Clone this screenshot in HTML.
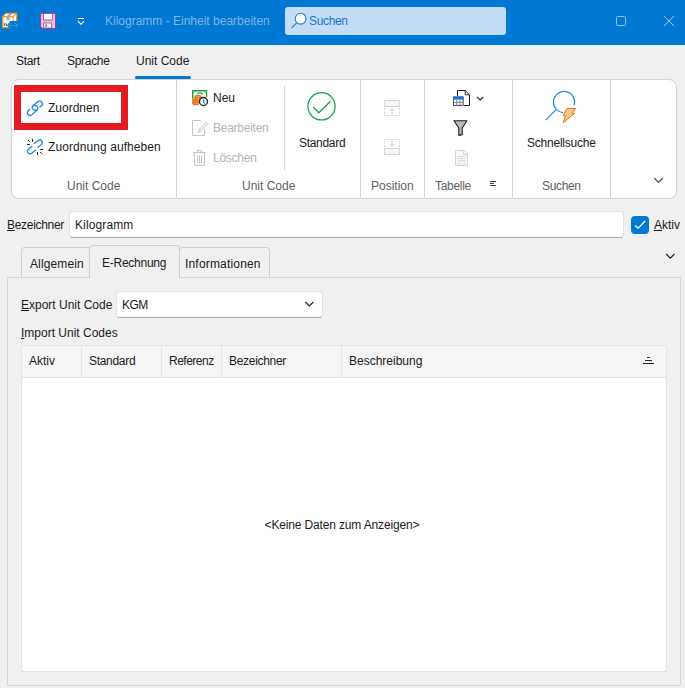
<!DOCTYPE html>
<html lang="de">
<head>
<meta charset="utf-8">
<title>Kilogramm - Einheit bearbeiten</title>
<style>
*{box-sizing:border-box;margin:0;padding:0}
html,body{width:685px;height:688px;overflow:hidden}
body{background:#f0f0f0;font-family:"Liberation Sans",sans-serif;font-size:12px;color:#1b1b1b;position:relative}
.t{position:absolute;white-space:nowrap;line-height:16px;height:16px}
.abs{position:absolute}
#titlebar{position:absolute;left:0;top:0;width:685px;height:45px;background:#0078d4}
#search{position:absolute;left:285px;top:7px;width:221px;height:28px;background:#c2ddf5;border-radius:3px}
#ribbon{position:absolute;left:11px;top:79px;width:666px;height:120px;background:#fff;border:1px solid #d3d3d3;border-radius:8px}
.vsep{position:absolute;width:1px;background:#d2d2d2}
.glabel{color:#616161}
.dis{color:#b4b4b4}
#inp{position:absolute;left:69px;top:211px;width:555px;height:27px;background:#fff;border:1px solid #e2e2e2;border-bottom-color:#a8a8a8;border-radius:4px}
#chk{position:absolute;left:631px;top:216px;width:18px;height:18px;background:#0078d4;border-radius:4px}
.tab{position:absolute;border:1px solid #d0d0d0;border-bottom:none;border-radius:4px 4px 0 0;background:#f0f0f0}
#panel{position:absolute;left:7px;top:277px;width:674px;height:409px;border:1px solid #d6d6d6;background:#f0f0f0}
#combo{position:absolute;left:116px;top:291px;width:207px;height:27px;background:#fff;border:1px solid #e2e2e2;border-bottom-color:#a8a8a8;border-radius:4px}
#grid{position:absolute;left:21px;top:345px;width:646px;height:327px;background:#fff;border:1px solid #e3e3e3}
#ghead{position:absolute;left:0;top:0;width:644px;height:32px;background:#f5f5f5;border-bottom:1px solid #e6e6e6}
.csep{position:absolute;top:0;width:1px;height:31px;background:#e4e4e4}
</style>
</head>
<body>
<!-- title bar -->
<div id="titlebar">
  <div class="t" style="left:105px;top:13px;color:#7fb6ea">Kilogramm - Einheit bearbeiten</div>
  <div id="search"></div>
  <div class="t" style="left:309px;top:13px;color:#1b74d2;letter-spacing:-0.35px">Suchen</div>
  <!-- app icon -->
  <svg class="abs" style="left:0px;top:8px" width="22" height="24" viewBox="0 8 22 24">
    <path d="M2.6 16.6 L5.8 13.4 H16.6 V24.4 L13.2 27.6 H2.6 Z" fill="#fff" stroke="#f7931e" stroke-width="1.3" stroke-linejoin="round"/>
    <path d="M2.6 16.6 H13.2 L16.6 13.4 M13.2 16.6 V27.6" fill="none" stroke="#f7931e" stroke-width="1.2"/>
    <path d="M6.6 16.4 Q7 14.6 10.6 13.6 L11.8 14.4 Q9.6 15.2 9.6 16.6 V20.4 H6.6 Z" fill="#a9a9a9"/>
    <path d="M4.3 23.2 V26 M5.9 23.2 L6.8 26" stroke="#333" stroke-width="0.9" fill="none"/>
    <path d="M6.8 25.5 L10.2 21 H17.6 L18.6 25.5 L14.6 29.4 H10.6 Z" fill="#0078d4"/>
    <path d="M8.2 25.5 H17.4 M10.4 23.1 L8 25.5 L10.4 27.9 M15.2 23.1 L17.6 25.5 L15.2 27.9" fill="none" stroke="#3596e0" stroke-width="1"/>
  </svg>
  <!-- save icon -->
  <svg class="abs" style="left:40px;top:13px" width="16" height="16" viewBox="0 0 16 16">
    <path d="M0.5 0.5 H15.5 V15.5 H2.5 L0.5 13.5 Z" fill="#eac1e3" stroke="#a23a9c" stroke-width="1"/>
    <rect x="3.5" y="0.5" width="9" height="6.5" fill="#fff" stroke="#a23a9c" stroke-width="0.8"/>
    <rect x="3.5" y="10" width="8" height="5" fill="#fff" stroke="#a23a9c" stroke-width="0.8"/>
    <rect x="5.5" y="11.5" width="1.2" height="2.5" fill="#444"/>
  </svg>
  <!-- qat dropdown -->
  <svg class="abs" style="left:77px;top:16px" width="9" height="10" viewBox="0 0 9 10">
    <path d="M1 2.5 H7" stroke="#fff" stroke-width="1"/>
    <path d="M1 5.2 L4 8.2 L7 5.2" fill="none" stroke="#fff" stroke-width="1.1"/>
  </svg>
  <!-- magnifier -->
  <svg class="abs" style="left:290px;top:11px" width="18" height="19" viewBox="0 0 18 19">
    <circle cx="10.6" cy="7.7" r="5.4" fill="#fff" stroke="#2a7fd2" stroke-width="1.1"/>
    <path d="M6.8 11.6 L1.5 17.2" stroke="#2a7fd2" stroke-width="1.1"/>
  </svg>
  <!-- maximize / close -->
  <svg class="abs" style="left:615px;top:15px" width="12" height="12" viewBox="0 0 12 12">
    <rect x="1.5" y="1.5" width="9" height="9" rx="1" fill="none" stroke="#8ec3ef" stroke-width="1"/>
  </svg>
  <svg class="abs" style="left:663px;top:15px" width="12" height="12" viewBox="0 0 12 12">
    <path d="M1 1 L11 11 M11 1 L1 11" stroke="#9ccaf0" stroke-width="1"/>
  </svg>
</div>

<!-- menu tabs -->
<div class="t" style="left:16px;top:53px;letter-spacing:-0.3px">Start</div>
<div class="t" style="left:67px;top:53px;letter-spacing:-0.3px">Sprache</div>
<div class="t" style="left:136px;top:53px">Unit Code</div>
<div class="abs" style="left:135px;top:76px;width:56px;height:3px;background:#0078d4;border-radius:2px"></div>

<!-- ribbon -->
<div id="ribbon"></div>
<div class="vsep" style="left:176px;top:80px;height:118px"></div>
<div class="vsep" style="left:284px;top:86px;height:84px"></div>
<div class="vsep" style="left:360px;top:80px;height:118px"></div>
<div class="vsep" style="left:424px;top:80px;height:118px"></div>
<div class="vsep" style="left:512px;top:80px;height:118px"></div>
<div class="vsep" style="left:610px;top:80px;height:118px"></div>

<div class="abs" style="left:14px;top:85px;width:114px;height:45px;border:7px solid #e31b23"></div>
<!-- link icon -->
<svg class="abs" style="left:26px;top:99px" width="18" height="18" viewBox="-1 -1 18 18">
  <g fill="none" stroke="#2484d6" stroke-width="1.3">
    <path d="M3.10 9.03 L1.33 10.65 A2.70 2.70 0 0 0 5.00 14.62 L9.79 10.20 A2.70 2.70 0 0 0 6.13 6.23"/>
    <path d="M12.45 7.35 L14.34 5.87 A2.70 2.70 0 0 0 11.01 1.62 L6.25 5.36 A2.70 2.70 0 0 0 9.58 9.61"/>
  </g>
</svg>
<!-- unlink icon -->
<svg class="abs" style="left:26px;top:138px" width="18" height="18" viewBox="-1 -1 18 18">
  <g fill="none" stroke="#2484d6" stroke-width="1.3" stroke-linecap="round">
    <path d="M4.80 7.38 L1.43 10.21 A2.60 2.60 0 0 0 4.77 14.19 L8.45 11.11"/>
    <path d="M11.02 8.28 L14.47 5.39 A2.60 2.60 0 0 0 11.13 1.41 L7.30 4.62"/>
  </g>
  <g stroke="#1a1a1a" stroke-width="1" fill="none">
    <path d="M5.5 0 V2.8 M1 1 L2.9 2.9 M0 5.5 H2.8"/>
    <path d="M10.5 16 V13.2 M15 14.8 L13.1 12.9 M16 10.5 H13.2"/>
  </g>
</svg>
<div class="t" style="left:48px;top:100px">Zuordnen</div>
<div class="t" style="left:48px;top:139px;letter-spacing:0.08px">Zuordnung aufheben</div>
<div class="t glabel" style="left:67px;top:178px">Unit Code</div>

<!-- Neu icon -->
<svg class="abs" style="left:192px;top:90px" width="17" height="17" viewBox="0 0 17 17">
  <path d="M0 0 H15.2 V6.9 H13.9 V3.1 L12.2 1.5 H3 L1.4 3.1 V8.8 H0 Z" fill="#1a9f44"/>
  <circle cx="1.6" cy="1.6" r="0.5" fill="#fff"/><circle cx="13.6" cy="1.6" r="0.5" fill="#fff"/>
  <path d="M5.4 3.9 Q7.6 1.9 9.8 3.6 L10.4 4.6" fill="none" stroke="#1a9f44" stroke-width="1.3"/>
  <g fill="#e8731f">
    <rect x="2.4" y="5" width="7" height="4.6" rx="1.6"/>
    <rect x="0.2" y="8.6" width="6.6" height="6.4" rx="1.7"/>
    <rect x="1.8" y="13" width="4.8" height="2.2" rx="1"/>
  </g>
  <g stroke="#f6c77c" stroke-width="0.6" fill="none">
    <path d="M4.4 6.6 H8.2"/><path d="M4.2 8.4 H6.6"/><path d="M2.2 11.2 H5.6"/><path d="M2.2 13.3 H5.8"/>
  </g>
  <circle cx="11.5" cy="11.5" r="4" fill="#fff" stroke="#222" stroke-width="1.3"/>
  <path d="M11.4 9.2 V12 L12.7 13.6" fill="none" stroke="#1b7fd8" stroke-width="1.2"/>
</svg>
<!-- Bearbeiten icon (disabled) -->
<svg class="abs" style="left:191px;top:120px" width="18" height="17" viewBox="0 0 18 17">
  <path d="M9.5 0.5 H1.5 V15.5 H13.5 V9.5" fill="none" stroke="#c4c4c4" stroke-width="1"/>
  <path d="M9.5 0.5 L11 2.2" fill="none" stroke="#c4c4c4" stroke-width="1"/>
  <path d="M15.2 2.2 L16.8 3.8 L9.2 11.6 L7 12.4 L7.7 10 Z" fill="#f4f4f4" stroke="#c4c4c4" stroke-width="0.9" stroke-linejoin="round"/>
</svg>
<!-- Löschen icon (disabled) -->
<svg class="abs" style="left:192px;top:149px" width="16" height="18" viewBox="0 0 16 18">
  <path d="M5.5 3.2 V1.5 H9.5 V3.2" fill="none" stroke="#c4c4c4" stroke-width="1"/>
  <path d="M1.2 3.5 H13.8" stroke="#c4c4c4" stroke-width="1.1"/>
  <path d="M2.5 4 V15 Q2.5 16.5 4 16.5 H11 Q12.5 16.5 12.5 15 V4" fill="none" stroke="#c4c4c4" stroke-width="1"/>
  <path d="M5.5 6.5 V14 M7.5 6.5 V14 M9.5 6.5 V14" stroke="#c4c4c4" stroke-width="1"/>
</svg>
<!-- Standard icon -->
<svg class="abs" style="left:306px;top:91px" width="31" height="31" viewBox="0 0 31 31">
  <circle cx="15.5" cy="15.3" r="13.6" fill="none" stroke="#1aa64a" stroke-width="1.3"/>
  <path d="M7.4 16.1 L12.8 21.8 L24.6 10.3" fill="none" stroke="#1aa64a" stroke-width="1.4"/>
</svg>
<!-- Position icons (disabled) -->
<svg class="abs" style="left:384px;top:100px" width="16" height="16" viewBox="0 0 16 16">
  <rect x="0.5" y="0.5" width="15" height="6" fill="#f5f5f5" stroke="#d8d8d8" stroke-width="1"/>
  <path d="M0.5 8 V15.5 H15.5 V8" fill="none" stroke="#d2d2d2" stroke-width="1" stroke-dasharray="2 1.5"/>
  <path d="M8 14 V8.8 M5.7 11 L8 8.7 L10.3 11" fill="none" stroke="#cdcdcd" stroke-width="0.9"/>
</svg>
<svg class="abs" style="left:384px;top:139px" width="16" height="17" viewBox="0 0 16 17">
  <path d="M0.5 8 V0.5 H15.5 V8" fill="none" stroke="#d2d2d2" stroke-width="1" stroke-dasharray="2 1.5"/>
  <rect x="0.5" y="9.5" width="15" height="6" fill="#f5f5f5" stroke="#d8d8d8" stroke-width="1"/>
  <path d="M8 2 V7.2 M5.7 5 L8 7.3 L10.3 5" fill="none" stroke="#cdcdcd" stroke-width="0.9"/>
</svg>
<!-- Tabelle icons -->
<svg class="abs" style="left:453px;top:90px" width="17" height="16" viewBox="0 0 17 16">
  <path d="M4.5 6.2 V0.5 H12.2 L16.5 4.8 V15.5 H11.2" fill="none" stroke="#1a1a1a" stroke-width="1"/>
  <path d="M12.2 0.5 V4.8 H16.5" fill="none" stroke="#1a1a1a" stroke-width="0.9"/>
  <rect x="0.5" y="7" width="9.6" height="8.4" fill="#fff" stroke="#444" stroke-width="1"/>
  <rect x="0" y="6.6" width="10.6" height="3" fill="#1b76d3"/>
  <path d="M0.5 12.4 H10 M3.7 10 V15.3 M6.9 10 V15.3" stroke="#777" stroke-width="0.9"/>
</svg>
<svg class="abs" style="left:476px;top:95px" width="9" height="7" viewBox="0 0 9 7">
  <path d="M1 1.8 L4.2 5 L7.4 1.8" fill="none" stroke="#222" stroke-width="1.1"/>
</svg>
<svg class="abs" style="left:453px;top:120px" width="16" height="17" viewBox="0 0 16 17">
  <path d="M1 0.8 H14 L9.2 8 V14.6 L5.8 15.4 V8 Z" fill="#bcbcbc" stroke="#1a1a1a" stroke-width="1.1" stroke-linejoin="round"/>
</svg>
<svg class="abs" style="left:455px;top:150px" width="14" height="17" viewBox="0 0 14 17">
  <path d="M0.5 0.5 H8.5 L12.5 4.5 V15.5 H0.5 Z" fill="#fafafa" stroke="#d2d2d2" stroke-width="1"/>
  <path d="M8.5 0.5 V4.5 H12.5" fill="none" stroke="#d2d2d2" stroke-width="0.9"/>
  <path d="M2.5 6.5 H10.5 M2.5 8.5 H10.5 M2.5 10.5 H10.5" stroke="#dedede" stroke-width="1"/>
  <rect x="2.5" y="12" width="8" height="2" fill="none" stroke="#dedede" stroke-width="0.8"/>
</svg>
<svg class="abs" style="left:489px;top:180px" width="9" height="8" viewBox="0 0 9 8">
  <path d="M1 1.5 H7 M1 3.5 H5 M1 5.5 H7" stroke="#444" stroke-width="1"/>
</svg>
<!-- Schnellsuche icon -->
<svg class="abs" style="left:544px;top:89px" width="34" height="36" viewBox="0 0 34 36">
  <path d="M30.1 16.3 A10.6 10.6 0 1 0 19.1 23.56" fill="none" stroke="#1e88d8" stroke-width="1.2"/>
  <path d="M11.8 20.9 L1.7 31.1" stroke="#1e88d8" stroke-width="1.2"/>
  <path d="M23 19.5 H31.9 L27.9 24.2 H30.8 L19.1 33.7 L21.5 26.7 H19.1 Z" fill="#f9cb7e" stroke="#e8741e" stroke-width="1" stroke-linejoin="round"/>
</svg>
<!-- collapse chevron -->
<svg class="abs" style="left:653px;top:176px" width="11" height="8" viewBox="0 0 11 8">
  <path d="M1.2 2 L5.5 6.3 L9.8 2" fill="none" stroke="#444" stroke-width="1.2"/>
</svg>
<div class="t" style="left:213px;top:90px">Neu</div>
<div class="t dis" style="left:213px;top:120px;letter-spacing:-0.25px">Bearbeiten</div>
<div class="t dis" style="left:213px;top:150px;letter-spacing:-0.25px">Löschen</div>
<div class="t" style="left:299px;top:135px;letter-spacing:-0.3px">Standard</div>
<div class="t glabel" style="left:242px;top:178px">Unit Code</div>

<div class="t glabel" style="left:371px;top:178px">Position</div>
<div class="t glabel" style="left:435px;top:178px;letter-spacing:-0.3px">Tabelle</div>
<div class="t" style="left:527px;top:135px;letter-spacing:-0.22px">Schnellsuche</div>
<div class="t glabel" style="left:542px;top:178px;letter-spacing:-0.35px">Suchen</div>

<!-- form -->
<div class="t" style="left:7px;top:217px;letter-spacing:-0.3px"><u>B</u>ezeichner</div>
<div id="inp"></div>
<div class="t" style="left:75px;top:217px;letter-spacing:0.12px">Kilogramm</div>
<div id="chk"><svg width="18" height="18" viewBox="0 0 18 18" style="display:block"><path d="M4 9.5 L7.2 12.2 L14.1 5" fill="none" stroke="#fff" stroke-width="1.3"/></svg></div>
<svg class="abs" style="left:665px;top:252px" width="11" height="8" viewBox="0 0 11 8"><path d="M1.2 2 L5.3 6.2 L9.4 2" fill="none" stroke="#222" stroke-width="1.2"/></svg>
<div class="t" style="left:654px;top:217px"><u>A</u>ktiv</div>

<!-- tabs -->
<div id="panel"></div>
<div class="tab" style="left:21px;top:247px;width:70px;height:31px;border-bottom:1px solid #d6d6d6"></div>
<div class="tab" style="left:179px;top:247px;width:91px;height:31px;border-bottom:1px solid #d6d6d6"></div>
<div class="tab" style="left:89px;top:245px;width:91px;height:33px"></div>
<div class="t" style="left:30px;top:256px;letter-spacing:0.12px">Allgemein</div>
<div class="t" style="left:102px;top:255px;letter-spacing:-0.25px">E-Rechnung</div>
<div class="t" style="left:185px;top:256px;letter-spacing:0.18px">Informationen</div>

<div class="t" style="left:21px;top:297px"><u>E</u>xport Unit Code</div>
<div id="combo"></div>
<svg class="abs" style="left:304px;top:300px" width="11" height="8" viewBox="0 0 11 8"><path d="M1.3 2 L5.3 6 L9.3 2" fill="none" stroke="#222" stroke-width="1.2"/></svg>
<div class="t" style="left:122px;top:297px;letter-spacing:-0.5px">KGM</div>
<div class="t" style="left:21px;top:325px"><u>I</u>mport Unit Codes</div>

<div id="grid">
  <div id="ghead"></div>
  <div class="csep" style="left:59px"></div>
  <div class="csep" style="left:139px"></div>
  <div class="csep" style="left:199px"></div>
  <div class="csep" style="left:319px"></div>
  <svg class="abs" style="left:620px;top:10px" width="13" height="9" viewBox="0 0 13 9"><path d="M5 1.5 H8 M3 4.5 H10 M1 7.5 H12" stroke="#222" stroke-width="1"/></svg>
  <div class="t" style="left:7px;top:7px">Aktiv</div>
  <div class="t" style="left:67px;top:7px;letter-spacing:-0.3px">Standard</div>
  <div class="t" style="left:147px;top:7px;letter-spacing:-0.5px;width:45px;overflow:hidden">Referenz</div>
  <div class="t" style="left:207px;top:7px;letter-spacing:-0.3px">Bezeichner</div>
  <div class="t" style="left:327px;top:7px">Beschreibung</div>
  <div class="t" style="left:-2px;width:644px;text-align:center;top:171px;letter-spacing:-0.15px">&lt;Keine Daten zum Anzeigen&gt;</div>
</div>
</body>
</html>
